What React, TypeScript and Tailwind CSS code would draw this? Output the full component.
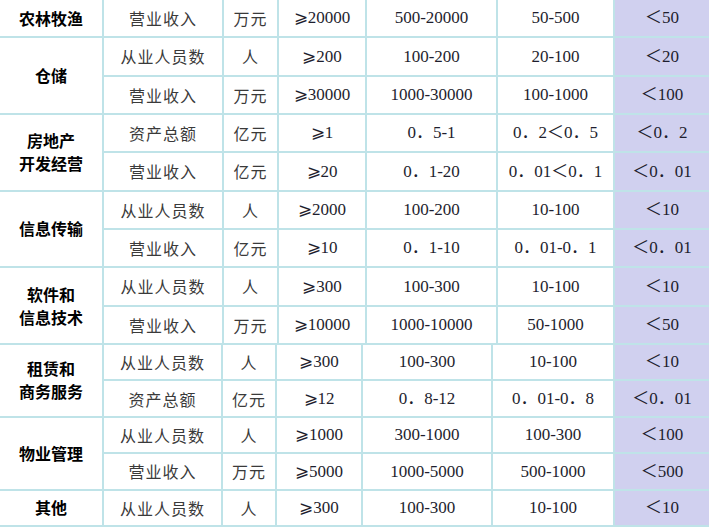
import React from 'react';

type Group = {
  name: string[];
  rows: string[][];
};

const topGroups: Group[] = [
  { name: ['农林牧渔'], rows: [['营业收入', '万元', '⩾20000', '500-20000', '50-500', '＜50']] },
  {
    name: ['仓储'],
    rows: [
      ['从业人员数', '人', '⩾200', '100-200', '20-100', '＜20'],
      ['营业收入', '万元', '⩾30000', '1000-30000', '100-1000', '＜100'],
    ],
  },
  {
    name: ['房地产', '开发经营'],
    rows: [
      ['资产总额', '亿元', '⩾1', '0．5-1', '0．2＜0．5', '＜0．2'],
      ['营业收入', '亿元', '⩾20', '0．1-20', '0．01＜0．1', '＜0．01'],
    ],
  },
  {
    name: ['信息传输'],
    rows: [
      ['从业人员数', '人', '⩾2000', '100-200', '10-100', '＜10'],
      ['营业收入', '亿元', '⩾10', '0．1-10', '0．01-0．1', '＜0．01'],
    ],
  },
  {
    name: ['软件和', '信息技术'],
    rows: [
      ['从业人员数', '人', '⩾300', '100-300', '10-100', '＜10'],
      ['营业收入', '万元', '⩾10000', '1000-10000', '50-1000', '＜50'],
    ],
  },
];

const bottomGroups: Group[] = [
  {
    name: ['租赁和', '商务服务'],
    rows: [
      ['从业人员数', '人', '⩾300', '100-300', '10-100', '＜10'],
      ['资产总额', '亿元', '⩾12', '0．8-12', '0．01-0．8', '＜0．01'],
    ],
  },
  {
    name: ['物业管理'],
    rows: [
      ['从业人员数', '人', '⩾1000', '300-1000', '100-300', '＜100'],
      ['营业收入', '万元', '⩾5000', '1000-5000', '500-1000', '＜500'],
    ],
  },
  { name: ['其他'], rows: [['从业人员数', '人', '⩾300', '100-300', '10-100', '＜10']] },
];

const cjk = "font-['Noto_Sans_CJK_SC',sans-serif]";
const num = "font-['Liberation_Serif','DejaVu_Serif','Noto_Sans_CJK_JP',serif]";

function Cells({ groups }: { groups: Group[] }) {
  return (
    <>
      {groups.map((g) => (
        <React.Fragment key={g.name.join('')}>
          <div
            className={`flex flex-col items-center justify-center bg-white text-[16px] font-bold leading-[23px] text-black ${cjk} ${
              g.rows.length === 2 ? 'row-span-2' : ''
            }`}
          >
            {g.name.map((n) => (
              <span key={n}>{n}</span>
            ))}
          </div>
          {g.rows.map((r, ri) =>
            r.map((c, ci) => (
              <div
                key={`${ri}-${ci}`}
                className={`flex items-center justify-center ${
                  ci === 5 ? 'bg-[#d0d0ef]' : 'bg-white'
                } ${ci < 2 ? `${cjk} text-[16px] tracking-[1px] text-[#3a3a3a]` : `${num} text-[17px] text-[#1e1e2e]`}`}
              >
                {c}
              </div>
            ))
          )}
        </React.Fragment>
      ))}
    </>
  );
}

export default function App() {
  return (
    <div className="w-[709px] h-[528px] bg-white overflow-hidden">
      <div className="grid h-[345px] grid-cols-[102px_118px_53px_86px_129px_115px_94px] grid-rows-[repeat(9,minmax(0,1fr))] gap-[2px] bg-[#bfe3e8] pb-[2px]">
        <Cells groups={topGroups} />
      </div>
      <div className="grid h-[182px] grid-cols-[102px_117px_52px_84px_128px_120px_94px] grid-rows-[repeat(5,minmax(0,1fr))] gap-[2px] bg-[#bfe3e8] pb-[2px]">
        <Cells groups={bottomGroups} />
      </div>
    </div>
  );
}
